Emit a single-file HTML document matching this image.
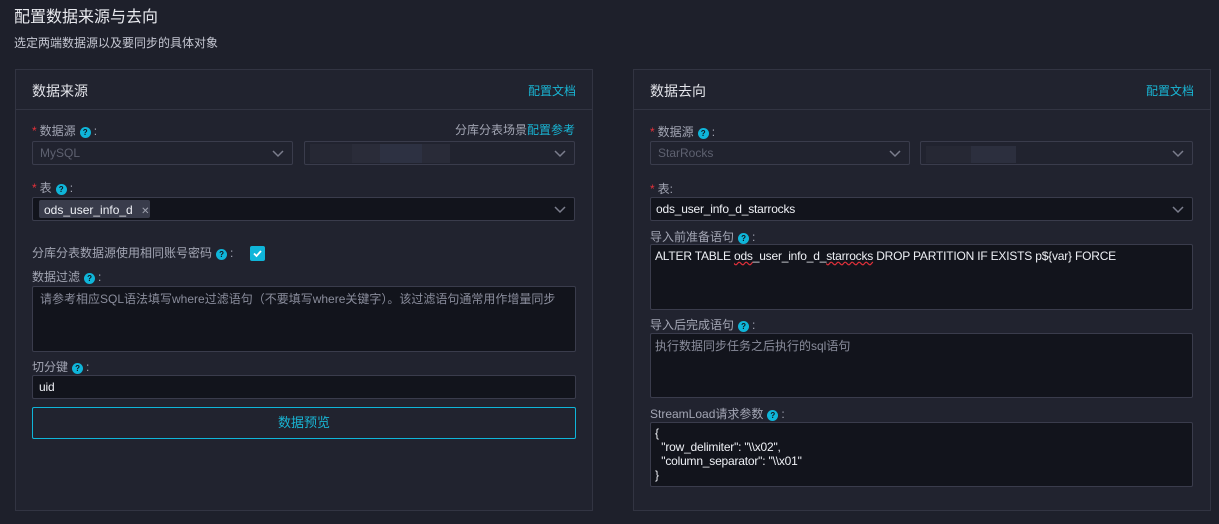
<!DOCTYPE html>
<html><head><meta charset="utf-8"><style>
*{box-sizing:border-box;margin:0;padding:0}
body{width:1219px;height:524px;background:#1e202b;font-family:"Liberation Sans","Noto Sans CJK SC",sans-serif;font-size:12px;color:#a3a6b4;position:relative;overflow:hidden}
.a{position:absolute;white-space:nowrap}
.panel{position:absolute;top:69px;height:442px;width:578px;background:#21232f;border:1px solid #323442}
.hd{position:absolute;left:0;right:0;top:0;height:40px;border-bottom:1px solid #323442}
.ht{position:absolute;left:16px;top:11px;font-size:14px;color:#e3e4ea}
.lk{position:absolute;right:16px;top:12px;font-size:12px;color:#19b5d4}
.lbl{position:absolute;font-size:12px;color:#a3a6b4;white-space:nowrap;line-height:14px}
.req{color:#e5313a;margin-right:3px}
.q{display:inline-block;width:11px;height:11px;border-radius:50%;background:#0fb5d9;color:#12141b;font-size:8px;font-weight:bold;text-align:center;line-height:11px;vertical-align:0;margin:0 3px 0 4px}
.box{position:absolute;border:1px solid #3a3c4c;border-radius:2px;background:#12141c}
.dis{background:#21232f}
.chev{position:absolute;right:8px;top:6px;width:12px;height:10px}
.val{position:absolute;left:8px;top:4px;color:#eef0f5;font-size:12px;letter-spacing:-0.2px}
.ph{position:absolute;left:7px;top:4px;color:#8a8d9c;font-size:12px}
</style></head><body>
<div class="a" style="left:14px;top:3px;font-size:16px;color:#e8e9ee">配置数据来源与去向</div>
<div class="a" style="left:14px;top:34px;font-size:12px;color:#c5c7d2">选定两端数据源以及要同步的具体对象</div>

<div class="panel" style="left:15px">
 <div class="hd"><div class="ht">数据来源</div><div class="lk">配置文档</div></div>
</div>
<div class="lbl" style="left:32px;top:124px"><span class="req">*</span>数据源<span class="q">?</span>:</div>
<div class="lbl" style="left:455px;top:123px">分库分表场景<span style="color:#19b5d4">配置参考</span></div>
<div class="box dis" style="left:32px;top:141px;width:261px;height:24px"><div class="ph" style="color:#5e6170">MySQL</div><svg class="chev" viewBox="0 0 12 10"><path d="M1 3l5 5 5-5" fill="none" stroke="#7b7e8d" stroke-width="1.5"/></svg></div>
<div class="box dis" style="left:304px;top:141px;width:271px;height:24px"><div style="position:absolute;left:5px;top:2px;width:140px;height:19px;background:linear-gradient(90deg,#262834 0 30%,#2a2c39 30% 50%,#2d3142 50% 80%,#292b38 80%)"></div><svg class="chev" viewBox="0 0 12 10"><path d="M1 3l5 5 5-5" fill="none" stroke="#7b7e8d" stroke-width="1.5"/></svg></div>
<div class="lbl" style="left:32px;top:181px"><span class="req">*</span>表<span class="q">?</span>:</div>
<div class="box" style="left:32px;top:197px;width:543px;height:24px"><div style="position:absolute;left:6px;top:2px;width:111px;height:18px;background:#393c4b;border-radius:2px;color:#eef0f5;padding:3px 0 0 5px">ods_user_info_d <span style="color:#a0a3b0;font-size:10px;margin-left:5px">✕</span></div><svg class="chev" viewBox="0 0 12 10"><path d="M1 3l5 5 5-5" fill="none" stroke="#7b7e8d" stroke-width="1.5"/></svg></div>
<div class="lbl" style="left:32px;top:246px">分库分表数据源使用相同账号密码<span class="q">?</span>:</div>
<div class="a" style="left:250px;top:246px;width:15px;height:15px;background:#0fb5d9;border-radius:2px"><svg width="15" height="15" viewBox="0 0 15 15"><path d="M4 7.5l2.5 2.5 4.5-5" fill="none" stroke="#fff" stroke-width="1.8"/></svg></div>
<div class="lbl" style="left:32px;top:270px">数据过滤<span class="q">?</span>:</div>
<div class="box" style="left:32px;top:286px;width:544px;height:66px"><div class="ph" style="top:3px">请参考相应SQL语法填写where过滤语句（不要填写where关键字）。该过滤语句通常用作增量同步</div></div>
<div class="lbl" style="left:32px;top:360px">切分键<span class="q">?</span>:</div>
<div class="box" style="left:32px;top:375px;width:544px;height:24px"><div class="val" style="left:6px">uid</div></div>
<div class="a" style="left:32px;top:407px;width:544px;height:32px;border:1px solid #0fb5d9;border-radius:2px;color:#19b5d4;font-size:13px;text-align:center;line-height:29px">数据预览</div>

<div class="panel" style="left:633px">
 <div class="hd"><div class="ht">数据去向</div><div class="lk">配置文档</div></div>
</div>
<div class="lbl" style="left:650px;top:125px"><span class="req">*</span>数据源<span class="q">?</span>:</div>
<div class="box dis" style="left:650px;top:141px;width:260px;height:24px"><div class="ph" style="color:#5e6170">StarRocks</div><svg class="chev" viewBox="0 0 12 10"><path d="M1 3l5 5 5-5" fill="none" stroke="#7b7e8d" stroke-width="1.5"/></svg></div>
<div class="box dis" style="left:920px;top:141px;width:273px;height:24px"><div style="position:absolute;left:5px;top:4px;width:90px;height:17px;background:linear-gradient(90deg,#262834 0 50%,#2c2f3e 50%)"></div><svg class="chev" viewBox="0 0 12 10"><path d="M1 3l5 5 5-5" fill="none" stroke="#7b7e8d" stroke-width="1.5"/></svg></div>
<div class="lbl" style="left:650px;top:182px"><span class="req">*</span>表:</div>
<div class="box" style="left:650px;top:197px;width:543px;height:24px"><div class="val" style="left:5px">ods_user_info_d_starrocks</div><svg class="chev" viewBox="0 0 12 10"><path d="M1 3l5 5 5-5" fill="none" stroke="#7b7e8d" stroke-width="1.5"/></svg></div>
<div class="lbl" style="left:650px;top:230px">导入前准备语句<span class="q">?</span>:</div>
<div class="box" style="left:650px;top:244px;width:543px;height:66px"><div class="val" style="left:4px;top:4px">ALTER TABLE <span style="text-decoration:underline wavy #e0303a">ods</span>_user_info_d_<span style="text-decoration:underline wavy #e0303a">starrocks</span> DROP PARTITION IF EXISTS p${var} FORCE</div></div>
<div class="lbl" style="left:650px;top:318px">导入后完成语句<span class="q">?</span>:</div>
<div class="box" style="left:650px;top:333px;width:543px;height:65px"><div class="ph" style="left:4px;top:3px">执行数据同步任务之后执行的sql语句</div></div>
<div class="lbl" style="left:650px;top:407px">StreamLoad请求参数<span class="q">?</span>:</div>
<div class="box" style="left:650px;top:422px;width:543px;height:65px"><div class="val" style="left:4px;top:3px;white-space:pre;line-height:14px">{
  "row_delimiter": "\\x02",
  "column_separator": "\\x01"
}</div></div>
</body></html>
